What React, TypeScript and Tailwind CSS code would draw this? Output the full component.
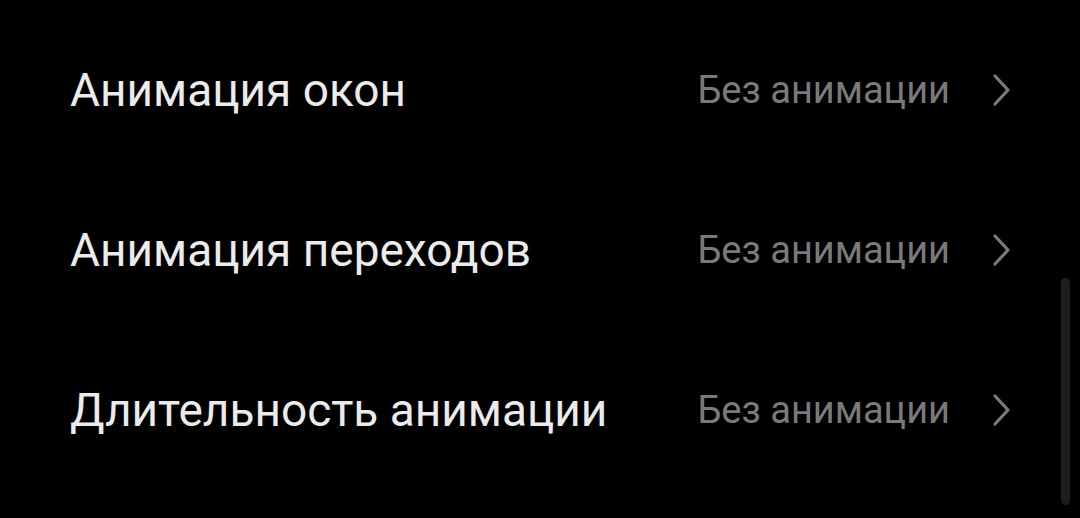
import React from "react";

const rows = ["Анимация окон", "Анимация переходов", "Длительность анимации"];

function Chevron() {
  return (
    <svg width="22" height="34" viewBox="0 0 22 34" className="ml-[40px]">
      <path d="M5 3 L18 17 L5 31" fill="none" stroke="#7a7a7a" strokeWidth="3.2" strokeLinecap="round" strokeLinejoin="round" />
    </svg>
  );
}

export default function App() {
  return (
    <div className="relative w-[1080px] h-[518px] bg-black overflow-hidden" style={{ fontFamily: "Roboto, 'Noto Sans', sans-serif" }}>
      <div className="flex flex-col pt-[10px]">
        {rows.map((r) => (
          <div key={r} className="h-[160px] flex items-center pl-[70px] pr-[68px]">
            <div className="flex-1 text-[46px] text-[#ebebeb] leading-none">{r}</div>
            <div className="text-[38px] text-[#7a7a7a] leading-none">Без анимации</div>
            <Chevron />
          </div>
        ))}
      </div>
      <div className="absolute left-[1061px] top-[278px] w-[9px] h-[227px] rounded-full bg-[#1e1e1e]" />
    </div>
  );
}
